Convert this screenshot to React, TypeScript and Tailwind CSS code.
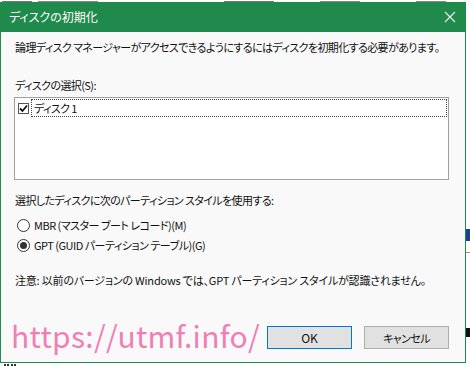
import React from 'react'

const jp = "font-['Noto_Sans_CJK_JP','Noto_Sans',sans-serif] [font-feature-settings:'palt']"

const Radio = ({ checked, label }: { checked?: boolean; label: string }) => (
  <div className="flex items-center h-[16px] pl-[3px]">
    <span className="w-[13px] h-[13px] rounded-full border border-[#333] bg-white flex items-center justify-center">
      {checked && <span className="w-[7px] h-[7px] rounded-full bg-[#333]" />}
    </span>
    <span className="ml-[4px] text-[11px] leading-[16px] tracking-[-0.5px] whitespace-nowrap text-[#111]">{label}</span>
  </div>
)

export default function App() {
  return (
    <div className={`relative w-[470px] h-[367px] bg-white overflow-hidden ${jp}`}>
      {/* stuff of the window behind */}
      <div className="absolute right-0 top-[229px] w-[4px] h-[12px] bg-[#1d3f8f]" />
      <div className="absolute right-0 top-[252px] w-[4px] h-[1px] bg-[#999]" />
      <div className="absolute right-0 top-[328px] w-[4px] h-[9px] bg-[#111]" />
      <div className="absolute left-[4px] bottom-0 w-[12px] h-[3px] border-t-2 border-[#333] border-dotted" />

      <div className="h-[2px] flex items-end gap-[6px] px-[2px]">
        <span className="w-[30px] h-[1px] bg-[#777]" />
        <span className="w-[60px] h-[1px] bg-[#888]" />
        <span className="ml-[120px] w-[50px] h-[1px] bg-[#777]" />
        <span className="ml-[40px] w-[40px] h-[1px] bg-[#888]" />
        <span className="ml-[50px] w-[30px] h-[1px] bg-[#888]" />
      </div>
      <div className="w-[466px] h-[361px] flex flex-col border-x border-b border-[#1f8a4b]">
        {/* title bar */}
        <div className="h-[30px] bg-[#1f8a4b] flex items-center justify-between pl-[8px] pr-[8px]">
          <span className="text-white text-[12px] leading-[16px]">ディスクの初期化</span>
          <svg width="12" height="12" viewBox="0 0 12 12" className="mr-[1px]">
            <path d="M1 1 L11 11 M11 1 L1 11" stroke="#e8f4ec" strokeWidth="1.2" />
          </svg>
        </div>

        {/* body */}
        <div className="flex-1 bg-[#f9f9f9] px-[13px] pt-[7px] flex flex-col text-[#111] text-[11px] leading-[16px] tracking-[-0.6px] whitespace-nowrap">
          <p className="pl-[1px]">
            論理ディスク マネージャーがアクセスできるようにするにはディスクを初期化する必要があります。
          </p>

          <p className="mt-[22px] pl-[1px]">ディスクの選択(S):</p>
          <div className="mt-[4px] w-[435px] h-[83px] border border-[#a0a0a0] bg-white p-[1px]">
            <div className="flex items-center h-[18px]">
              <span className="ml-[2px] w-[11px] h-[11px] border border-[#555] bg-white flex items-center justify-center">
                <svg width="9" height="9" viewBox="0 0 9 9">
                  <path d="M1 4.5 L3.5 7 L8 1.5" stroke="#111" strokeWidth="1.8" fill="none" />
                </svg>
              </span>
              <div className="ml-[2px] flex-1 h-[18px] border border-dotted border-[#444] flex items-center pl-[2px]">
                <span>ディスク 1</span>
              </div>
            </div>
          </div>

          <p className="mt-[12px] pl-[1px]">
            選択したディスクに次のパーティション スタイルを使用する:
          </p>
          <div className="mt-[9px] flex flex-col gap-[4px]">
            <Radio label="MBR (マスター ブート レコード)(M)" />
            <Radio checked label="GPT (GUID パーティション テーブル)(G)" />
          </div>

          <p className="mt-[19px] pl-[1px] tracking-[-0.2px]">
            注意: 以前のバージョンの Windows では、GPT パーティション スタイルが認識されません。
          </p>

          <div className="mt-[30px] flex items-start">
            <span className="w-[256px] -ml-[3px] text-[30px] leading-[34px] tracking-[0.3px] text-[#f07fb6] font-['Noto_Sans_CJK_JP',sans-serif]">
              https://utmf.info/
            </span>
            <button className="mt-[8px] w-[85px] h-[23px] border border-[#0078d7] bg-[#e1e1e1] text-[12px] leading-[16px] tracking-normal text-[#111]">
              OK
            </button>
            <button className="mt-[8px] ml-[12px] w-[85px] h-[23px] border border-[#adadad] bg-[#e1e1e1] text-[11px] leading-[16px] text-[#111]">
              キャンセル
            </button>
          </div>
        </div>
      </div>
    </div>
  )
}
